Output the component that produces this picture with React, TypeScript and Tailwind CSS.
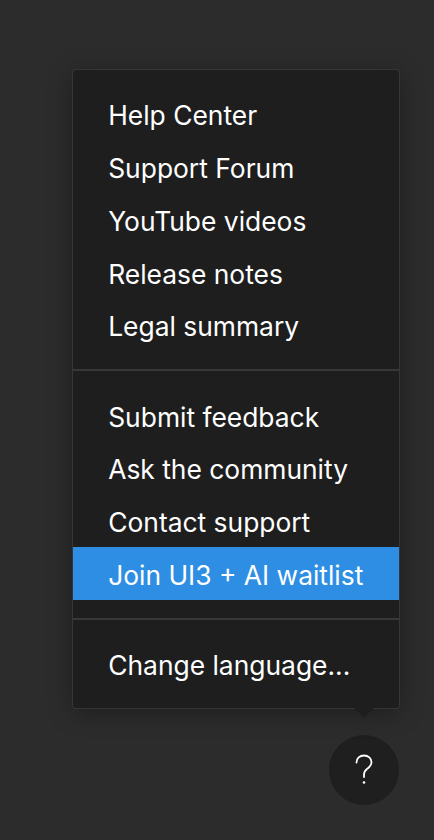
import React from "react";

const group1 = ["Help Center", "Support Forum", "YouTube videos", "Release notes", "Legal summary"];
const group2 = ["Submit feedback", "Ask the community", "Contact support", "Join UI3 + AI waitlist"];
const group3 = ["Change language..."];

function Item({ label, active }: { label: string; active?: boolean }) {
  return (
    <div
      className={
        "h-[52.8px] flex items-center pl-[35.2px] pt-[3px] text-[26.4px] leading-none text-white " +
        (active ? "bg-[#2d8ee3]" : "")
      }
    >
      {label}
    </div>
  );
}

function Sep() {
  return <div className="h-[2.2px] my-[17.6px] bg-[#383838]" />;
}

export default function App() {
  return (
    <div
      className="min-h-screen w-full bg-[#2c2c2c] flex flex-col items-end pt-[70px] pr-[35px]"
      style={{ fontFamily: "Inter, 'Noto Sans', sans-serif" }}
    >
      <div className="relative w-[326px]">
        <div className="bg-[#1e1e1e] rounded-[3px] ring-1 ring-[#363636] shadow-[0_4px_24px_rgba(0,0,0,0.35)] py-[17.6px]">
          {group1.map((l) => (
            <Item key={l} label={l} />
          ))}
          <Sep />
          {group2.map((l) => (
            <Item key={l} label={l} active={l.startsWith("Join")} />
          ))}
          <Sep />
          {group3.map((l) => (
            <Item key={l} label={l} />
          ))}
        </div>
        <div className="absolute right-[25px] top-full w-0 h-0 border-l-[10px] border-r-[10px] border-t-[10px] border-l-transparent border-r-transparent border-t-[#1e1e1e]" />
      </div>
      <div className="mt-[27px] w-[70.4px] h-[70.4px] rounded-full bg-[#1f1f1f] flex items-center justify-center">
        <svg width="20" height="32" viewBox="0 0 20 32" fill="none">
          <path
            d="M2.5 8.5 C2.5 4.2 5.8 1.5 10 1.5 C14.2 1.5 17.5 4.3 17.5 8.3 C17.5 11.6 15.3 13.2 13.2 14.8 C11.3 16.3 10 17.6 10 20.5 V23"
            stroke="white"
            strokeWidth="1.8"
            strokeLinecap="round"
          />
          <circle cx="10" cy="28.5" r="1.3" fill="white" />
        </svg>
      </div>
    </div>
  );
}
